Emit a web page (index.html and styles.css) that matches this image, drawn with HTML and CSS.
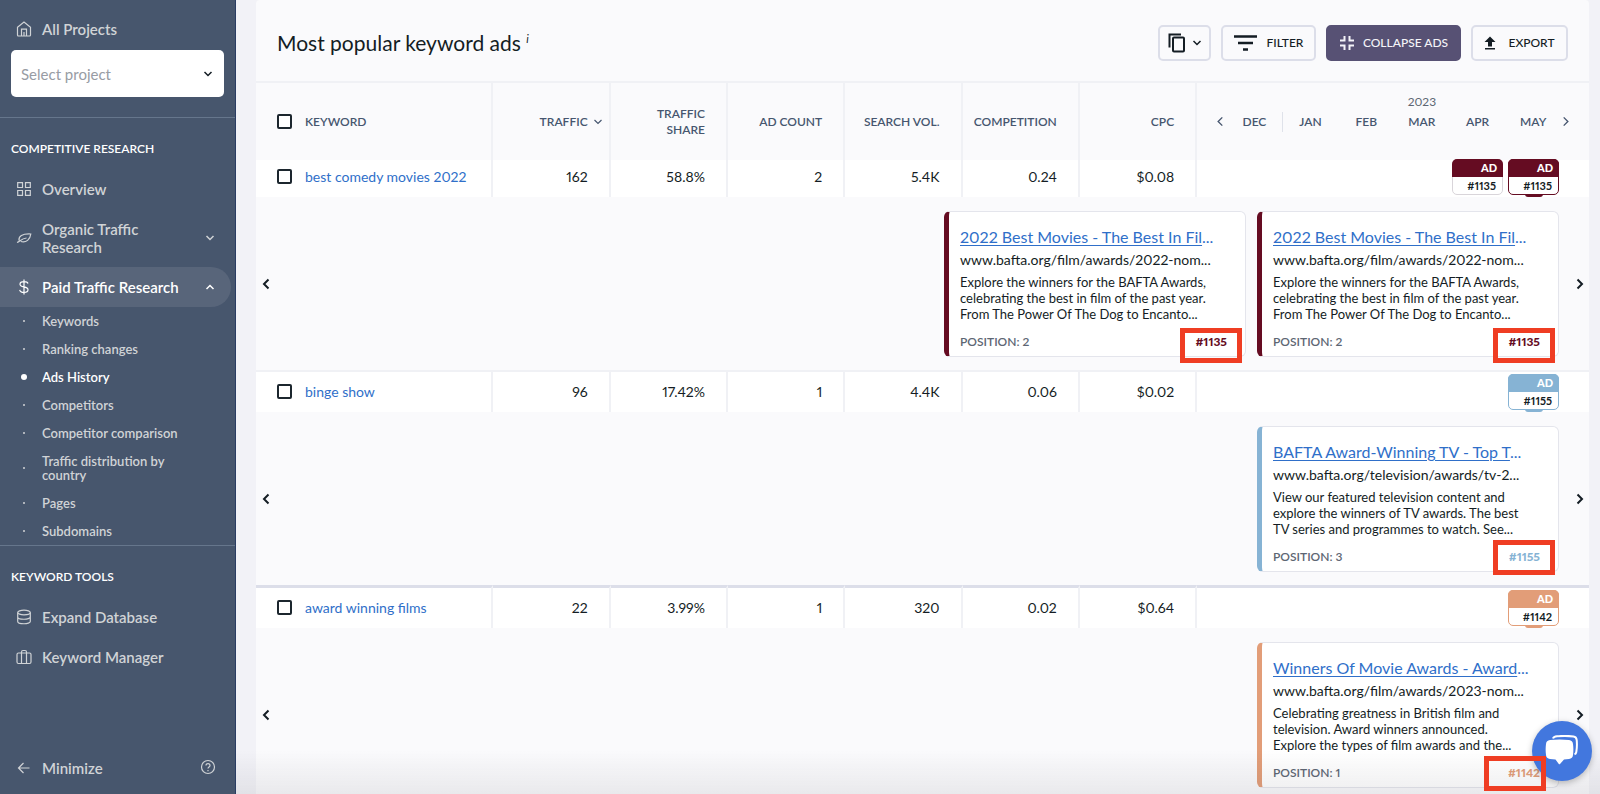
FILE: index.html
```
<!DOCTYPE html>
<html lang="en">

<head>
  <meta charset="UTF-8">
  <meta name="viewport" content="width=device-width, initial-scale=1.0">
  <title>Ads History</title>
  <link rel="stylesheet" href="styles.css">
</head>

<body>
  <svg width="0" height="0" class="sprite">
    <symbol id="left" viewBox="0 0 8 12"><path d="M6.500 1.500L2 6l4.500 4.500" /></symbol>
    <symbol id="right" viewBox="0 0 8 12"><path d="M1.500 1.500L6 6l-4.500 4.500" /></symbol>
    <symbol id="down" viewBox="0 0 10 8"><path d="M1.500 2L5 5.500 8.500 2" /></symbol>
    <symbol id="up" viewBox="0 0 10 8"><path d="M1.500 6L5 2.500 8.500 6" /></symbol>
  </svg>

  <div class="app">
    <nav class="sidebar">
      <a class="item" href="#">
        <svg class="icon" viewBox="0 0 16 16"><path d="M1.500 6.200L8 1l6.500 5.200V14a1 1 0 0 1-1 1h-11a1 1 0 0 1-1-1zM5.500 15V8.200h5V15M8 15v-4" /></svg>
        <span>All Projects</span>
      </a>
      <div class="project">
        <select aria-label="Select project">
          <option>Select project</option>
        </select>
        <svg class="chevron"><use href="#down" /></svg>
      </div>

      <section>
        <h2>COMPETITIVE RESEARCH</h2>
        <a class="item" href="#">
          <svg class="icon" viewBox="0 0 16 16"><path d="M1.700 1.700h4.800v4.800H1.700zM9.500 1.700h4.800v4.800H9.500zM1.700 9.500h4.800v4.800H1.700zM9.500 9.500h4.800v4.800H9.500z" /></svg>
          <span>Overview</span>
        </a>
        <a class="item double" href="#">
          <svg class="icon" viewBox="0 0 16 16"><path d="M1 12.500c3.200-1 4-3.800 9.500-4.500M3 10.500C2.500 6 6 3.600 14.800 4c-.6 5.500-4.600 9-10 7.500" /></svg>
          <span>Organic Traffic Research</span>
          <svg class="chevron"><use href="#down" /></svg>
        </a>
        <a class="item active" href="#">
          <svg class="icon" viewBox="0 0 16 16"><path d="M8 0.500v15M12 4.500C11.500 3 10 2.600 8 2.600c-2.400 0-4 .9-4 2.600C4 9 12 6.800 12 10.800c0 1.700-1.600 2.600-4 2.600s-4-.8-4.300-2.600" /></svg>
          <span>Paid Traffic Research</span>
          <svg class="chevron"><use href="#up" /></svg>
        </a>
        <ul>
          <li><a href="#">Keywords</a></li>
          <li><a href="#">Ranking changes</a></li>
          <li class="current"><a href="#">Ads History</a></li>
          <li><a href="#">Competitors</a></li>
          <li><a href="#">Competitor comparison</a></li>
          <li><a href="#">Traffic distribution by country</a></li>
          <li><a href="#">Pages</a></li>
          <li><a href="#">Subdomains</a></li>
        </ul>
      </section>

      <section>
        <h2>KEYWORD TOOLS</h2>
        <a class="item" href="#">
          <svg class="icon" viewBox="0 0 16 16"><ellipse cx="8" cy="3.500" rx="6.300" ry="2.300" /><path d="M1.700 3.500v9c0 3 12.600 3 12.600 0v-9M1.700 8c0 3 12.600 3 12.600 0" /></svg>
          <span>Expand Database</span>
        </a>
        <a class="item" href="#">
          <svg class="icon" viewBox="0 0 16 16"><rect x="1" y="4" width="14" height="10.500" rx="1.500" /><path d="M5.500 14.500V3A1.500 1.500 0 0 1 7 1.500h2A1.500 1.500 0 0 1 10.500 3v11.500" /></svg>
          <span>Keyword Manager</span>
        </a>
      </section>

      <div class="bottom">
        <button class="item">
          <svg class="icon" viewBox="0 0 16 16"><path d="M13.500 8H3M7.500 3L2.500 8l5 5" /></svg>
          <span>Minimize</span>
        </button>
        <button class="help" aria-label="Help">
          <svg class="icon" viewBox="0 0 16 16"><circle cx="8" cy="8" r="6.500" /><path d="M6 6.500c0-2.700 4-2.500 4 0C10 8 8 8 8 9.500M8 11v1.200" /></svg>
        </button>
      </div>
    </nav>

    <main>
      <header>
        <h1>Most popular keyword ads <sup>i</sup></h1>
        <div class="actions">
          <button class="btn copy" aria-label="Copy">
            <svg width="18" height="20" viewBox="0 0 18 20"><path d="M1.500 14.500v-13H13" /><rect x="5" y="4.500" width="11" height="14" rx="1" /></svg>
            <svg class="chevron"><use href="#down" /></svg>
          </button>
          <button class="btn filter">
            <svg width="24" height="16" viewBox="0 0 24 16"><path d="M0 1.500h23M4 8h15M9 14.500h5" /></svg>
            FILTER
          </button>
          <button class="btn primary">
            <svg width="16" height="16" viewBox="0 0 16 16"><path d="M1 5.500h4.500V1M10.500 1v4.500H15M1 10.500h4.500V15M10.500 15v-4.500H15" /></svg>
            COLLAPSE ADS
          </button>
          <button class="btn export">
            <svg width="12" height="14" viewBox="0 0 12 14"><path d="M6 0.500L11.500 6H8v4.500H4V6H.5zM1 12h10v1.500H1z" /></svg>
            EXPORT
          </button>
        </div>
      </header>

      <table>
        <colgroup>
          <col>
          <col class="num" span="6">
          <col class="months">
        </colgroup>
        <thead>
          <tr>
            <th class="keyword"><label><input type="checkbox"> KEYWORD</label></th>
            <th class="sorted">TRAFFIC <svg class="chevron"><use href="#down" /></svg></th>
            <th>TRAFFIC<br>SHARE</th>
            <th>AD COUNT</th>
            <th>SEARCH VOL.</th>
            <th>COMPETITION</th>
            <th>CPC</th>
            <th class="timeline">
              <div class="calendar">
                <button aria-label="Earlier months"><svg><use href="#left" /></svg></button>
                <div class="year">2023</div>
                <div class="month last">DEC</div>
                <div class="month">JAN</div>
                <div class="month">FEB</div>
                <div class="month">MAR</div>
                <div class="month">APR</div>
                <div class="month">MAY</div>
                <button aria-label="Later months"><svg><use href="#right" /></svg></button>
              </div>
            </th>
          </tr>
        </thead>

        <tbody class="wine">
          <tr class="row">
            <td class="keyword"><div><input type="checkbox" aria-label="Select best comedy movies 2022"> <a href="#">best comedy movies 2022</a></div></td>
            <td>162</td>
            <td>58.8%</td>
            <td>2</td>
            <td>5.4K</td>
            <td>0.24</td>
            <td>$0.08</td>
            <td class="timeline">
              <div class="badges">
                <div class="badge"><b>AD</b><span>#1135</span></div>
                <div class="badge open"><b>AD</b><span>#1135</span></div>
              </div>
            </td>
          </tr>
          <tr class="ads">
            <td colspan="8">
              <div class="strip">
                <button aria-label="Previous ads"><svg><use href="#left" /></svg></button>
                <article class="card">
                  <h3><a href="#">2022 Best Movies - The Best In Fil</a>...</h3>
                  <p class="url">www.bafta.org/film/awards/2022-nom...</p>
                  <p>Explore the winners for the BAFTA Awards,<br>celebrating the best in film of the past year.<br>From The Power Of The Dog to Encanto...</p>
                  <footer>POSITION: 2 <strong>#1135</strong></footer>
                  <div class="mark"></div>
                </article>
                <article class="card">
                  <h3><a href="#">2022 Best Movies - The Best In Fil</a>...</h3>
                  <p class="url">www.bafta.org/film/awards/2022-nom...</p>
                  <p>Explore the winners for the BAFTA Awards,<br>celebrating the best in film of the past year.<br>From The Power Of The Dog to Encanto...</p>
                  <footer>POSITION: 2 <strong>#1135</strong></footer>
                  <div class="mark"></div>
                </article>
                <button aria-label="Next ads"><svg><use href="#right" /></svg></button>
              </div>
            </td>
          </tr>
        </tbody>

        <tbody class="sky">
          <tr class="row">
            <td class="keyword"><div><input type="checkbox" aria-label="Select binge show"> <a href="#">binge show</a></div></td>
            <td>96</td>
            <td>17.42%</td>
            <td>1</td>
            <td>4.4K</td>
            <td>0.06</td>
            <td>$0.02</td>
            <td class="timeline">
              <div class="badges">
                <div class="badge open"><b>AD</b><span>#1155</span></div>
              </div>
            </td>
          </tr>
          <tr class="ads">
            <td colspan="8">
              <div class="strip">
                <button aria-label="Previous ads"><svg><use href="#left" /></svg></button>
                <article class="card">
                  <h3><a href="#">BAFTA Award-Winning TV - Top T</a>...</h3>
                  <p class="url">www.bafta.org/television/awards/tv-2...</p>
                  <p>View our featured television content and<br>explore the winners of TV awards. The best<br>TV series and programmes to watch. See...</p>
                  <footer>POSITION: 3 <strong>#1155</strong></footer>
                  <div class="mark"></div>
                </article>
                <button aria-label="Next ads"><svg><use href="#right" /></svg></button>
              </div>
            </td>
          </tr>
        </tbody>

        <tbody class="clay">
          <tr class="row">
            <td class="keyword"><div><input type="checkbox" aria-label="Select award winning films"> <a href="#">award winning films</a></div></td>
            <td>22</td>
            <td>3.99%</td>
            <td>1</td>
            <td>320</td>
            <td>0.02</td>
            <td>$0.64</td>
            <td class="timeline">
              <div class="badges">
                <div class="badge open"><b>AD</b><span>#1142</span></div>
              </div>
            </td>
          </tr>
          <tr class="ads">
            <td colspan="8">
              <div class="strip">
                <button aria-label="Previous ads"><svg><use href="#left" /></svg></button>
                <article class="card">
                  <h3><a href="#">Winners Of Movie Awards - Award</a>...</h3>
                  <p class="url">www.bafta.org/film/awards/2023-nom...</p>
                  <p>Celebrating greatness in British film and<br>television. Award winners announced.<br>Explore the types of film awards and the...</p>
                  <footer>POSITION: 1 <strong>#1142</strong></footer>
                  <div class="mark"></div>
                </article>
                <button aria-label="Next ads"><svg><use href="#right" /></svg></button>
              </div>
            </td>
          </tr>
        </tbody>
      </table>
    </main>
  </div>

  <div class="fade"></div>
  <button class="chat" aria-label="Open chat">
    <svg width="34" height="32" viewBox="0 0 34 32">
      <path class="back" d="M8 3.500C8.500 2 10 1.500 12 1.300c5-.5 12-.5 16.500.2 2 .3 3 1.500 3.200 3.500.4 4 .3 8-.4 12-.2 1.300-.8 2-1.800 2.300" />
      <path class="front" d="M5 5c6-.8 13-.8 19 0 2.500.3 3.700 1.500 4 4 .5 4 .5 7 0 11-.3 2.500-1.500 3.700-4 4-1.800.3-3.500.4-5 .5l-4 4.500c-.4.400-.8.400-1.200 0l-3.300-4.500c-2-.1-3.700-.2-5.500-.5-2.500-.3-3.700-1.500-4-4-.5-4-.5-7 0-11C1.300 6.500 2.500 5.300 5 5z" />
    </svg>
  </button>
</body>

</html>
```
FILE: styles.css
```
:root {
  --ink: #141d24;
  --slate: #46566f;
  --line: #f0f1f5;
  --panel: #fafafc;
  --link: #2f6fc9;
  font-family: Lato, "Noto Sans", sans-serif;
  font-size: 14px;
  font-variant-numeric: proportional-nums;
  color: var(--ink);
}

* {
  box-sizing: border-box;
}

body, h1, h2, h3, p, ul {
  margin: 0;
}

body {
  background-color: #f2f2f7;
}

button {
  font: inherit;
  color: inherit;
  background: none;
  border: none;
  padding: 0;
}

svg {
  flex: none;
  fill: none;
  stroke: currentColor;
}

.sprite {
  position: absolute;
}

.chevron {
  width: 10px;
  height: 8px;
  stroke-width: 1.5;
}

.app {
  display: flex;
  height: 100vh;
  overflow: hidden;
}

/* Sidebar */

.sidebar {
  display: flex;
  flex-direction: column;
  flex: none;
  width: 236px;
  padding: 9px 0 6px;
  background-color: #47566d;
  border-right: 1px solid #2a3d63;
  color: #d0d3d6;
  font-size: 15px;
  font-weight: 600;
}

.item {
  display: flex;
  align-items: center;
  gap: 10px;
  height: 40px;
  padding: 0 20px 0 16px;
  color: inherit;
  line-height: 18px;
  text-decoration: none;
}

.item .chevron {
  margin-left: auto;
}

.item.double {
  height: 58px;
}

.item.double span {
  width: 110px;
}

.item.active {
  margin-right: 4px;
  padding-right: 16px;
  background-color: #58657a;
  border-radius: 0 20px 20px 0;
  color: #fff;
}

.icon {
  width: 16px;
  height: 16px;
  stroke-width: 1.2;
}

.project {
  display: grid;
  align-items: center;
  margin: 1px 11px 20px;
}

.project select {
  grid-area: 1 / 1;
  appearance: none;
  width: 100%;
  height: 47px;
  padding: 0 10px;
  border: none;
  border-radius: 5px;
  background-color: #fff;
  color: #989ca4;
  font: inherit;
  font-weight: 400;
}

.project .chevron {
  grid-area: 1 / 1;
  justify-self: end;
  margin-right: 11px;
  color: var(--ink);
}

.sidebar section {
  padding-top: 19px;
  border-top: 1px solid #66768c;
}

.sidebar h2 {
  margin-bottom: 8px;
  padding-left: 11px;
  color: #fff;
  font-size: 12px;
  font-weight: 600;
  line-height: 24px;
}

.sidebar ul {
  padding: 0;
  list-style: none;
  font-size: 13px;
}

.sidebar li {
  display: flex;
  align-items: center;
  padding: 7px 50px 7px 0;
  line-height: 14px;
}

.sidebar li::before {
  content: "";
  flex: none;
  width: 2px;
  height: 2px;
  margin: 0 17px 0 23px;
  border-radius: 50%;
  background-color: currentColor;
}

.sidebar li.current {
  color: #fff;
}

.sidebar li.current::before {
  width: 6px;
  height: 6px;
  margin: 0 15px 0 21px;
}

.sidebar li a {
  color: inherit;
  text-decoration: none;
}

.bottom {
  display: flex;
  justify-content: space-between;
  margin-top: auto;
  padding-right: 19px;
}

/* Table panel */

main {
  flex: 1;
  min-width: 0;
  margin: 0 11px 0 20px;
  background-color: var(--panel);
  border-radius: 4px 4px 0 0;
}

header {
  display: flex;
  align-items: center;
  justify-content: space-between;
  height: 83px;
  padding: 4px 21px 0;
  border-bottom: 2px solid var(--line);
}

h1 {
  font-size: 21px;
  font-weight: 400;
}

h1 sup {
  font-size: 11px;
  font-style: italic;
}

.actions {
  display: flex;
  gap: 10px;
}

.btn {
  display: flex;
  align-items: center;
  justify-content: center;
  height: 36px;
  border: 2px solid #dcdee9;
  border-radius: 5px;
  font-size: 12px;
  font-weight: 500;
}

.copy {
  gap: 6px;
  width: 53px;
  stroke-width: 2;
}

.filter {
  gap: 9px;
  width: 95px;
  stroke-width: 2.5;
}

.primary {
  gap: 8px;
  width: 135px;
  border-color: #575174;
  background-color: #575174;
  color: #f4f4f8;
  stroke-width: 2;
}

.export {
  gap: 12px;
  width: 97px;
}

.export svg {
  fill: currentColor;
  stroke: none;
}

table {
  width: 100%;
  table-layout: fixed;
  border-collapse: separate;
  border-spacing: 0;
}

.num {
  width: 8.8%;
}

.months {
  width: 29.4%;
}

th, .row td {
  padding: 0 21px 1px 8px;
  border-right: 2px solid var(--line);
  text-align: right;
}

th {
  height: 74px;
  padding-top: 3px;
  padding-bottom: 0;
  color: var(--slate);
  font-size: 12px;
  font-weight: 600;
  line-height: 16px;
}

th.keyword, .row td.keyword {
  padding-left: 21px;
  text-align: left;
}

.keyword label, .keyword div {
  display: flex;
  align-items: center;
}

th.timeline, .row td.timeline {
  padding: 0 18px 0 16px;
  border-right: none;
}

.sorted .chevron {
  float: right;
  margin: 4px -15px 0 0;
  stroke-width: 1.2;
}

input[type="checkbox"] {
  appearance: none;
  width: 15px;
  height: 15px;
  margin: 0 13px 0 0;
  border: 2px solid #1c262e;
  border-radius: 2px;
  background-color: #fff;
}

.calendar {
  display: grid;
  grid-template-columns: 14px repeat(6, 1fr) 10px;
  grid-template-rows: 20px 20px 20px;
  align-items: center;
  padding-top: 3px;
  line-height: 20px;
  text-align: center;
}

.calendar > * {
  grid-row: 2;
}

.calendar .year {
  grid-area: 1 / 3 / 2 / 8;
  color: #5d6673;
  font-weight: 400;
}

.calendar .last {
  border-right: 1px solid #dfe2ea;
}

.calendar svg {
  display: block;
  width: 8px;
  height: 11px;
  margin: auto;
  stroke-width: 1.5;
}

.row td {
  height: 40px;
  background-color: #fff;
}

/* the head runs 3px over the first row */
.wine .row td {
  box-shadow: inset 0 3px 0 var(--panel);
}

.sky .row td, .clay .row td {
  height: 42px;
  border-top: 2px solid var(--line);
}

.clay .row td {
  height: 43px;
  border-top: 3px solid #dcdee9;
}

.row a {
  color: var(--link);
  text-decoration: none;
}

.badges {
  display: flex;
  justify-content: flex-end;
  gap: 5px;
  padding-right: 12px;
}

.badge {
  position: relative;
  width: 51px;
  height: 36px;
  border: 1px solid #d9d5da;
  border-radius: 5px;
  background-color: #fff;
  font-size: 11px;
  font-weight: 700;
  line-height: 17px;
}

.badge b, .badge span {
  display: block;
  padding-right: 6px;
}

.badge b {
  margin: -1px -1px 0;
  border-radius: 5px 5px 0 0;
  background-color: var(--tone);
  color: #fff;
  line-height: 18px;
}

.badge.open {
  border-color: var(--tone);
}

.badge.open::after {
  content: "";
  position: absolute;
  bottom: -3px;
  left: 16px;
  width: 18px;
  height: 3px;
  border-radius: 0 0 3px 3px;
  background-color: var(--tone);
}

.wine {
  --tone: #650c22;
}

.sky {
  --tone: #86b3d4;
}

.clay {
  --tone: #e29d78;
}

.ads td {
  padding: 14px 0 13px;
}

.strip {
  display: flex;
  align-items: center;
  gap: 11px;
}

.strip > button {
  width: 19px;
  height: 30px;
}

.strip > button:first-child {
  margin-right: auto;
}

.strip > button svg {
  width: 8px;
  height: 12px;
  stroke-width: 2;
}

.card {
  position: relative;
  width: 302px;
  height: 146px;
  padding: 13px 18px 0 11px;
  border: 1px solid #e4e5ec;
  border-left: 5px solid var(--tone);
  border-radius: 6px;
  background-color: #fff;
  font-size: 13px;
  line-height: 16px;
}

.card h3 {
  font-size: 16px;
  font-weight: 400;
  line-height: 24px;
  color: var(--link);
}

.card a {
  color: inherit;
  text-underline-offset: 2px;
}

.card .url {
  margin-bottom: 3px;
  font-size: 14px;
  line-height: 22px;
}

.card footer {
  display: flex;
  justify-content: space-between;
  margin-top: 12px;
  color: #5d6673;
  font-size: 12px;
  font-weight: 600;
}

.card strong {
  color: var(--tone);
}

/* red frame round the ad number */
.mark {
  position: absolute;
  right: 3px;
  bottom: -4px;
  z-index: 2;
  width: 62px;
  height: 35px;
  border: 5px solid #ef3d23;
}

.wine .mark {
  bottom: -7px;
}

.clay .mark {
  right: 12px;
}

.fade {
  position: fixed;
  inset: auto 0 0 236px;
  height: 44px;
  background-image: linear-gradient(transparent, rgb(90 90 100 / .1));
}

.chat {
  position: fixed;
  right: 8px;
  bottom: 13px;
  z-index: 1;
  display: grid;
  place-items: center;
  width: 60px;
  height: 60px;
  border-radius: 50%;
  background-color: #4277de;
  box-shadow: 0 2px 6px rgb(0 0 0 / .25);
}

.chat .back {
  stroke: #fff;
  stroke-width: 2;
}

.chat .front {
  fill: #fff;
  stroke: none;
}
```
